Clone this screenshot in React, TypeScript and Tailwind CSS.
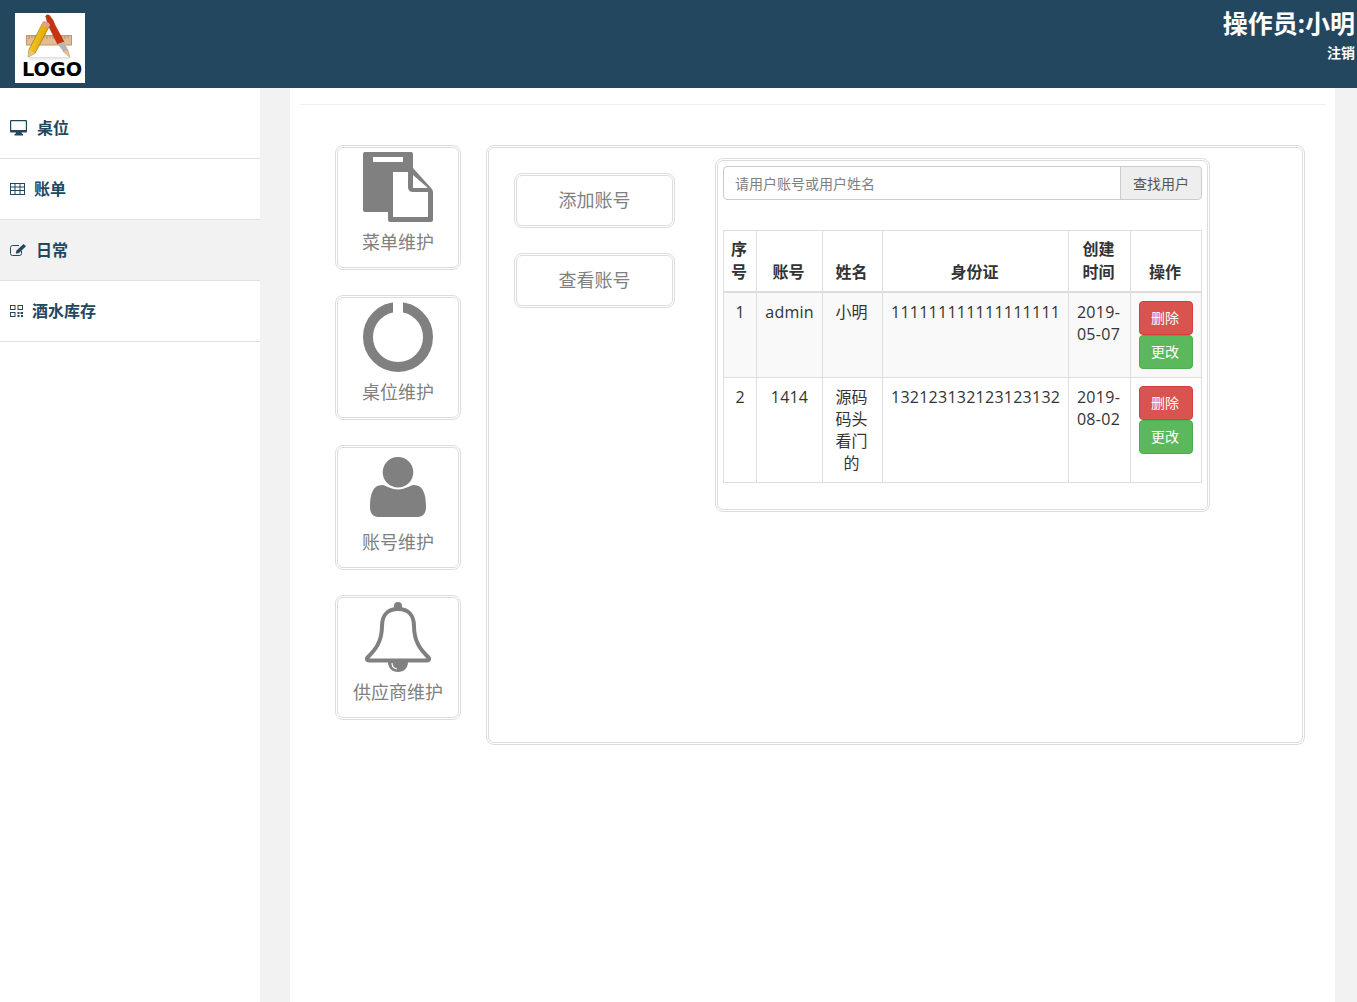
import React from "react";

const MonitorIcon = () => (
  <svg width="17" height="16" viewBox="0 0 17 16" className="mr-[10px] shrink-0">
    <path fill="#23475f" fillRule="evenodd" d="M1 0h15a1 1 0 0 1 1 1v10.500a1 1 0 0 1-1 1h-4.500l.5 1.500h1v1.500H4.500V14h1l.5-1.500H1a1 1 0 0 1-1-1V1a1 1 0 0 1 1-1Zm.2 1.200V10h14.600V1.200Z" />
  </svg>
);

const TableIcon = () => (
  <svg width="15" height="12" viewBox="0 0 15 12" className="mr-[9px] shrink-0">
    <path fill="#23475f" fillRule="evenodd" d="M0 0h15v12H0Zm1 1v2.500h3.500V1Zm4.500 0v2.500h4V1Zm5 0v2.500H14V1ZM1 4.500V7h3.500V4.500Zm4.500 0V7h4V4.500Zm5 0V7H14V4.500ZM1 8v3h3.500V8Zm4.500 0v3h4V8Zm5 0v3H14V8Z" />
  </svg>
);

const EditIcon = () => (
  <svg width="16" height="12" viewBox="0 0 16 12" className="mr-[10px] shrink-0">
    <path fill="none" stroke="#23475f" strokeWidth="1" d="M11.500 7v2.500a2 2 0 0 1-2 2h-7a2 2 0 0 1-2-2v-6a2 2 0 0 1 2-2H9" />
    <path fill="#23475f" d="M13.500 0 16 2.300 9 9 5.800 9.800 6.500 6.500Z" />
  </svg>
);

const QrIcon = () => (
  <svg width="13" height="12" viewBox="0 0 13 12" className="mr-[9px] shrink-0">
    <path fill="#23475f" fillRule="evenodd" d="M0 0h5.500v5H0Zm1 1v3h3.500V1Zm6.500-1H13v5H7.500Zm1 1v3H12V1ZM0 7h5.500v5H0Zm1 1v3h3.500V8Zm6.500-1h2v2h-2Zm3 0H13v2h-2.500Zm-3 3h2v2h-2Zm3.500 0h2v2h-2Z" />
  </svg>
);

const FileIcon = () => (
  <svg width="70" height="70" viewBox="0 0 70 70">
    <path fill="#808080" d="M2 0h46a2 2 0 0 1 2 2v14l18 20q2 2 2 4v28a2 2 0 0 1-2 2H27a2 2 0 0 1-2-2v-8H2a2 2 0 0 1-2-2V2a2 2 0 0 1 2-2Z" />
    <path fill="#fff" d="M10 5h30v5H10ZM30 20h15v15q0 5 5 5h15v25H30ZM50 23l15 13H50Z" />
  </svg>
);

const PowerIcon = () => (
  <svg width="70" height="70" viewBox="0 0 70 70">
    <circle cx="35" cy="35" r="30" fill="none" stroke="#808080" strokeWidth="10" />
    <rect x="30" y="0" width="10" height="12" fill="#fff" />
  </svg>
);

const UserIcon = () => (
  <svg width="56" height="60" viewBox="0 0 56 60">
    <circle cx="28" cy="15.300" r="15.300" fill="#808080" />
    <path fill="#808080" d="M0 50C0 37 3 28 12 28c4 0 8 4.500 16 4.500S40 28 44 28c9 0 12 9 12 22 0 6-3 10-8 10H8c-5 0-8-4-8-10Z" />
  </svg>
);

const BellIcon = () => (
  <svg width="66" height="70" viewBox="0 0 66 70">
    <circle cx="33" cy="4" r="4" fill="#808080" />
    <path fill="#808080" d="M23 60h20c0 6-4 10-10 10s-10-4-10-10Z" />
    <path fill="none" stroke="#fff" strokeWidth="1.200" d="M27 61c0 3 2 5.500 5 6" />
    <path fill="#fff" stroke="#808080" strokeWidth="4" strokeLinejoin="round" d="M33 7c-11 0-16 7-16 17 0 16-7 24-14 31-2 2-1 3.500 1 3.500h58c2 0 3-1.500 1-3.500-7-7-14-15-14-31 0-10-5-17-16-17Z" />
  </svg>
);

const LogoIcon = () => (
  <svg width="70" height="70" viewBox="0 0 70 70" className="bg-white">
    <defs>
      <linearGradient id="shade" x1="0" y1="0" x2="0" y2="1">
        <stop offset="0" stopColor="#dddddd" />
        <stop offset="1" stopColor="#ffffff" />
      </linearGradient>
      <linearGradient id="pencil" x1="0" y1="0" x2="1" y2="0.500">
        <stop offset="0" stopColor="#ffdf33" />
        <stop offset="1" stopColor="#d99a00" />
      </linearGradient>
    </defs>
    <rect x="14" y="44" width="40" height="4" fill="url(#shade)" />
    <rect x="11.500" y="22.500" width="45" height="9.500" fill="#e2bd92" stroke="#c4946a" strokeWidth="1" />
    <path stroke="#a5794f" strokeWidth="0.700" d="M14 23v3M17 23v2M20 23v3M23 23v2M26 23v3M29 23v2M32 23v3M35 23v2M38 23v3M41 23v2M44 23v3M47 23v2M50 23v3M53 23v2" />
    <path fill="#c8330f" stroke="#9c2608" strokeWidth="0.500" d="M30.700 3q1.300-2 3.800-.5Q38 6 40 12l9 16.700-6.500 2.300L33 12Z" />
    <path fill="#b5b5b5" d="M42.500 31l6.500-2.300 4 8.300-5 1.200Z" />
    <path fill="#e8c096" stroke="#b98f68" strokeWidth="0.500" d="M48 38.200l5-1.200 2 7.500Z" />
    <path fill="url(#pencil)" stroke="#8f6b00" strokeWidth="0.600" d="M28.300 8.700 35 12 20 40.300 13 44l1-7.500Z" />
    <path fill="#e79a9a" d="M28.300 8.700c1.300-1.700 6.700 1 6.700 3.300l-1.500 2.800-6.700-3.500Z" />
    <path fill="#e8c096" d="M14.300 37l5.700 3.300-7 3.700Z" />
    <text x="7" y="63" fontFamily="'DejaVu Sans', sans-serif" fontWeight="700" fontSize="20" textLength="60" lengthAdjust="spacingAndGlyphs" fill="#000">LOGO</text>
  </svg>
);

const cards = [
  { label: "菜单维护", icon: <FileIcon /> },
  { label: "桌位维护", icon: <PowerIcon /> },
  { label: "账号维护", icon: <UserIcon /> },
  { label: "供应商维护", icon: <BellIcon /> },
];

const navItems = [
  { label: "桌位", icon: <MonitorIcon />, active: false },
  { label: "账单", icon: <TableIcon />, active: false },
  { label: "日常", icon: <EditIcon />, active: true },
  { label: "酒水库存", icon: <QrIcon />, active: false },
];

const rows = [
  { id: "1", account: "admin", name: "小明", card: "111111111111111111", date: "2019-05-07" },
  { id: "2", account: "1414", name: "源码码头看门的", card: "132123132123123132", date: "2019-08-02" },
];

const App = () => {
  return (
    <div className="min-h-[1002px] flex flex-col bg-[#f2f2f2] font-['Open_Sans','Noto_Sans_CJK_SC',sans-serif] text-[#333333]">
      {/* 顶部 */}
      <header className="h-[88px] bg-[#23475f] flex justify-between pl-[15px] pr-[2px] text-white">
        <div className="pt-[13px]">
          <LogoIcon />
        </div>
        <div className="text-right font-bold">
          <div className="text-[25px] leading-[34px] mt-[6px]">操作员:小明</div>
          <div className="text-[14px] leading-[20px] mt-[3px]">注销</div>
        </div>
      </header>

      <div className="flex flex-1">
        {/* 左侧菜单 */}
        <aside className="w-[260px] bg-white pt-[10px] shrink-0">
          {navItems.map((item) => (
            <div
              key={item.label}
              className={
                item.active
                  ? "h-[61px] pl-[10px] flex items-center border-b border-[#e0e0e0] bg-[#f2f2f2] text-[16px] font-bold text-[#23475f]"
                  : "h-[61px] pl-[10px] flex items-center border-b border-[#e0e0e0] bg-white text-[16px] font-bold text-[#23475f]"
              }
            >
              {item.icon}
              {item.label}
            </div>
          ))}
        </aside>

        {/* 内容 */}
        <main className="w-[1045px] ml-[30px] bg-white">
          <hr className="mt-4 mx-[10px] border-t border-[#eeeeee]" />
          <div className="flex gap-[25px] pl-[45px] pt-[40px]">
            <div className="w-[126px] flex flex-col gap-[25px]">
              {cards.map((card) => (
                <div
                  key={card.label}
                  className="h-[125px] border-[3px] border-double border-[#dddddd] rounded-[8px] flex flex-col items-center text-[18px] text-[#808080]"
                >
                  <div className="h-[70px] mt-[4px] flex items-center">{card.icon}</div>
                  <div className="leading-[26px] mt-[7px] whitespace-nowrap">{card.label}</div>
                </div>
              ))}
            </div>

            <div className="w-[819px] h-[600px] border-[3px] border-double border-[#dddddd] rounded-[8px] flex pl-[25px] pt-[10px]">
              <div className="w-[161px] pt-[15px] flex flex-col gap-[25px]">
                <div className="h-[55px] pb-px border-[3px] border-double border-[#dddddd] rounded-[8px] flex items-center justify-center text-[18px] text-[#808080]">
                  添加账号
                </div>
                <div className="h-[55px] pb-px border-[3px] border-double border-[#dddddd] rounded-[8px] flex items-center justify-center text-[18px] text-[#808080]">
                  查看账号
                </div>
              </div>

              <div className="ml-[40px] w-[495px] h-[354px] border-[3px] border-double border-[#dddddd] rounded-[8px] px-[5px] pt-[5px]">
                <div className="flex h-[34px] text-[14px]">
                  <div className="flex-1 border border-[#cccccc] rounded-l-[4px] pl-[11px] flex items-center text-[#808080]">
                    请用户账号或用户姓名
                  </div>
                  <div className="w-[82px] -ml-px border border-[#cccccc] rounded-r-[4px] bg-[#eeeeee] flex items-center justify-center text-[#555555]">
                    查找用户
                  </div>
                </div>

                <table className="mt-[30px] w-[478px] table-fixed border-collapse text-[16px] leading-[22px] text-center">
                  <colgroup>
                    <col className="w-[33px]" />
                    <col className="w-[66px]" />
                    <col className="w-[60px]" />
                    <col className="w-[186px]" />
                    <col className="w-[62px]" />
                    <col className="w-[71px]" />
                  </colgroup>
                  <thead>
                    <tr className="font-bold leading-[23px]">
                      <th className="border border-b-2 border-[#dddddd] pl-[7px] pr-[9px] pt-[7px] pb-[7px] align-bottom">序号</th>
                      <th className="border border-b-2 border-[#dddddd] pl-[7px] pr-[9px] pt-[7px] pb-[7px] align-bottom">账号</th>
                      <th className="border border-b-2 border-[#dddddd] pl-[7px] pr-[9px] pt-[7px] pb-[7px] align-bottom">姓名</th>
                      <th className="border border-b-2 border-[#dddddd] pl-[7px] pr-[9px] pt-[7px] pb-[7px] align-bottom">身份证</th>
                      <th className="border border-b-2 border-[#dddddd] pl-[7px] pr-[9px] pt-[7px] pb-[7px] align-bottom">创建时间</th>
                      <th className="border border-b-2 border-[#dddddd] pl-[7px] pr-[9px] pt-[7px] pb-[7px] align-bottom">操作</th>
                    </tr>
                  </thead>
                  <tbody>
                    {rows.map((row) => (
                      <tr key={row.id} className={row.id === "1" ? "bg-[#f9f9f9]" : "bg-white"}>
                        <td className="border border-[#dddddd] p-2 align-top">{row.id}</td>
                        <td className="border border-[#dddddd] p-2 align-top tracking-[0.2px]">{row.account}</td>
                        <td className="border border-[#dddddd] pl-[7px] pr-[9px] py-2 align-top">{row.name}</td>
                        <td className="border border-[#dddddd] p-2 align-top tracking-[0.25px]">{row.card}</td>
                        <td className="border border-[#dddddd] pl-[7px] pr-[9px] py-2 align-top tracking-[0.3px]">{row.date}</td>
                        <td className="border border-[#dddddd] p-2 align-top">
                          <div className="h-[34px] pr-[2px] border border-[#d43f3a] rounded-[4px] bg-[#d9534f] text-white text-[14px] flex items-center justify-center">
                            删除
                          </div>
                          <div className="h-[34px] pr-[2px] border border-[#4cae4c] rounded-[4px] bg-[#5cb85c] text-white text-[14px] flex items-center justify-center">
                            更改
                          </div>
                        </td>
                      </tr>
                    ))}
                  </tbody>
                </table>
              </div>
            </div>
          </div>
        </main>
      </div>
    </div>
  );
};

export default App;
